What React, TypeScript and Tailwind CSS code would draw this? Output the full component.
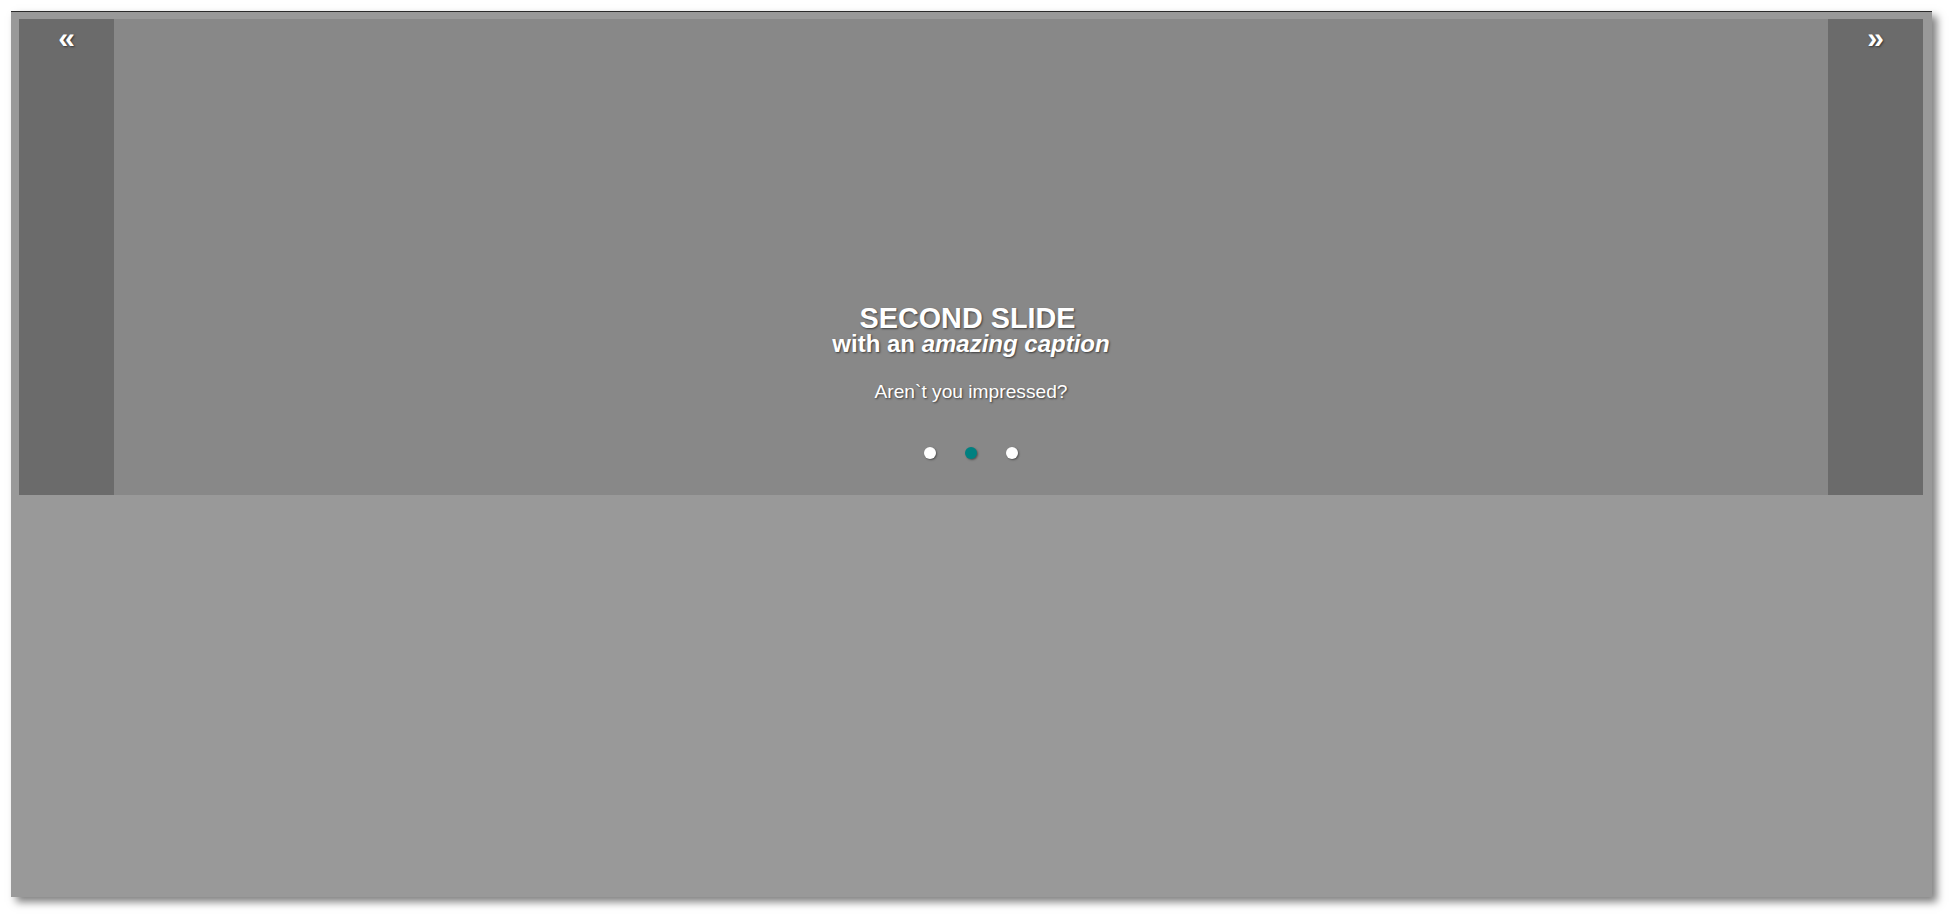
import React from "react";

const font = { fontFamily: '"Liberation Sans", Arial, sans-serif' };

function Dot({ active }: { active?: boolean }) {
  return (
    <span
      className={
        "block w-[12px] h-[12px] rounded-full shadow-[1px_1px_2px_rgba(0,0,0,0.4)] " +
        (active ? "bg-[#008080]" : "bg-white")
      }
    />
  );
}

export default function App() {
  return (
    <div className="w-[1950px] h-[916px] bg-white overflow-hidden" style={font}>
      <div className="ml-[11px] mt-[11px] w-[1921px] h-[886px] bg-[#999999] border-t border-[#2a2a2a] shadow-[5px_5px_8px_rgba(0,0,0,0.5)] pt-[7px] pl-[8px] pr-[9px]">
        <div className="flex h-[476px] text-white">
          <button className="w-[95px] shrink-0 bg-[#6b6b6b] flex justify-center items-start pt-[4px] text-[30px] leading-[30px] font-bold [text-shadow:1px_1px_2px_rgba(0,0,0,0.5)]">
            «
          </button>
          <div className="flex-1 bg-[#888888] flex flex-col items-center justify-end pb-[36px] [text-shadow:1px_1px_2px_rgba(0,0,0,0.55)]">
            <h2 className="flex flex-col items-center font-bold">
              <span className="mr-[7px] text-[28.8px] leading-[27px]">SECOND SLIDE</span>
              <span className="text-[24px] leading-[24px]">
                with an <em>amazing caption</em>
              </span>
            </h2>
            <p className="mt-[26px] text-[19.2px] leading-[19.2px]">Aren`t you impressed?</p>
            <div className="mt-[46px] flex gap-[29px]">
              <Dot />
              <Dot active />
              <Dot />
            </div>
          </div>
          <button className="w-[95px] shrink-0 bg-[#6b6b6b] flex justify-center items-start pt-[4px] text-[30px] leading-[30px] font-bold [text-shadow:1px_1px_2px_rgba(0,0,0,0.5)]">
            »
          </button>
        </div>
      </div>
    </div>
  );
}
